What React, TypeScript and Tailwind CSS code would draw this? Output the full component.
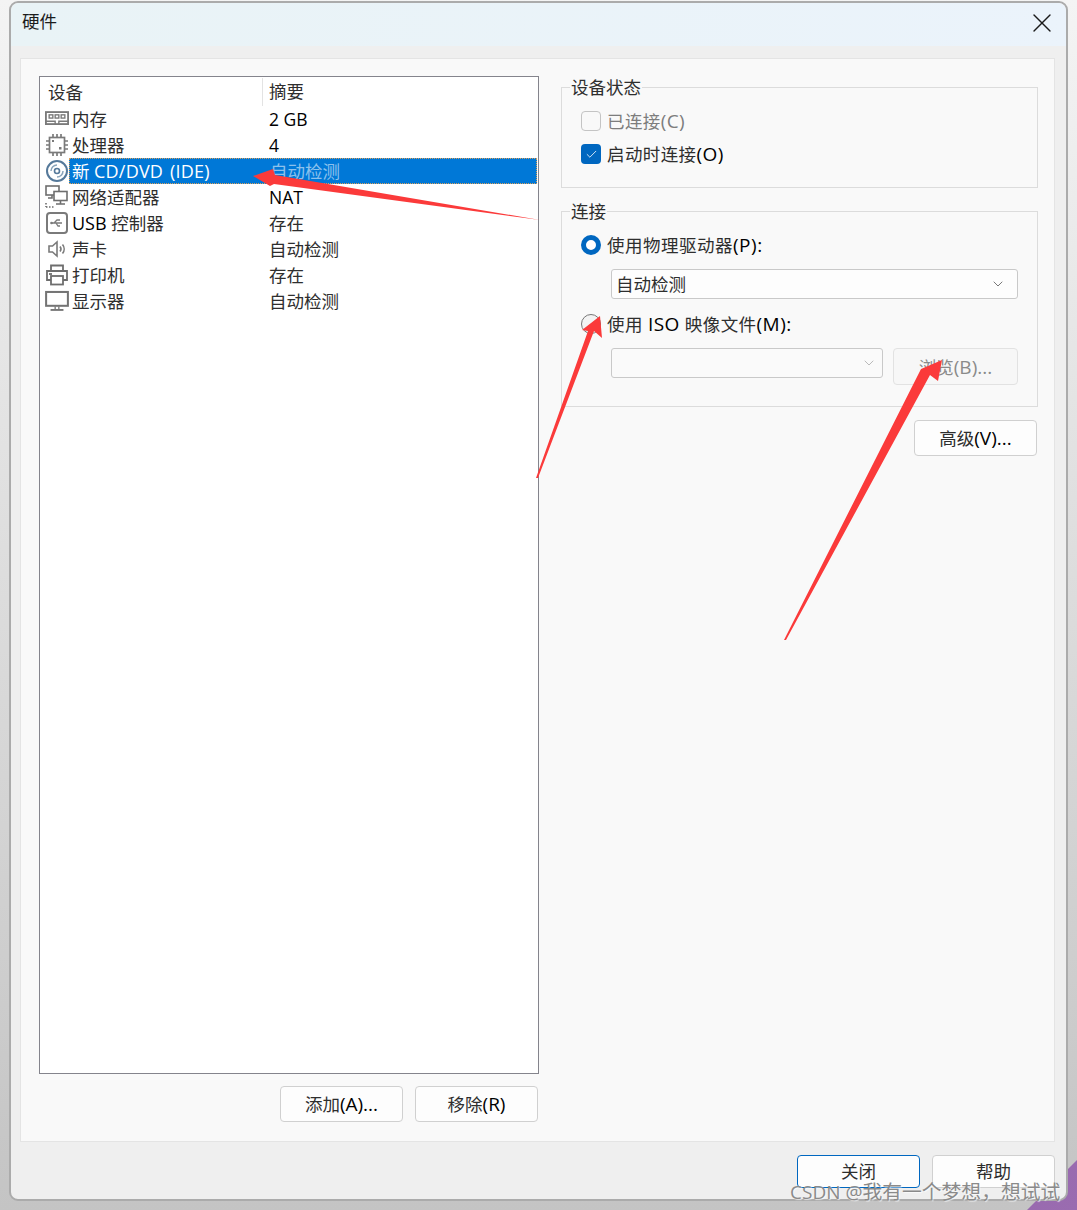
import { Check, ChevronDown, X } from "lucide-react";
import type { ReactNode } from "react";

const font = "font-['Open_Sans','Noto_Sans_CJK_SC',sans-serif]";

// latin runs sit a bit larger and darker than the CJK around them
function L({ children }: { children: ReactNode }) {
    return <span className="text-[19px] text-black [word-spacing:2px]">{children}</span>;
}

function Dim({ children }: { children: ReactNode }) {
    return <span className="text-[19px]">{children}</span>;
}

function MemoryIcon() {
    return (
        <svg width="26" height="18" viewBox="0 0 26 18" fill="none" stroke="#7a7a7a" strokeWidth="2">
            <rect x="1" y="1.5" width="24" height="13" />
            <rect x="4.5" y="4.5" width="4" height="3.5" strokeWidth="1.5" />
            <rect x="11" y="4.5" width="4" height="3.5" strokeWidth="1.5" />
            <rect x="17.5" y="4.5" width="4" height="3.5" strokeWidth="1.5" />
            <path d="M1 11.5h10v3M15 14.5v-3h10" strokeWidth="1.5" />
        </svg>
    );
}

function CpuIcon() {
    return (
        <svg width="24" height="24" viewBox="0 0 24 24" fill="none" stroke="#7a7a7a" strokeWidth="1.7">
            <rect x="4.5" y="4.5" width="15" height="15" />
            <path d="M8 1v3M12 1v3M16 1v3M8 20v3M12 20v3M16 20v3M1 8h3M1 12h3M1 16h3M20 8h3M20 12h3M20 16h3" />
            <rect x="7" y="7" width="2" height="2" fill="#7a7a7a" stroke="none" />
            <rect x="14" y="14" width="2.5" height="2.5" fill="#7a7a7a" stroke="none" />
        </svg>
    );
}

function DiscIcon() {
    return (
        <svg width="24" height="24" viewBox="0 0 24 24" fill="none" stroke="#55799a" strokeWidth="2">
            <circle cx="12" cy="12" r="10" />
            <circle cx="12" cy="12" r="2.5" strokeWidth="1.6" />
            <path d="M6 12a6 6 0 0 1 6-6M18 12a6 6 0 0 1-6 6" stroke="#8aa5bb" strokeWidth="1.5" />
        </svg>
    );
}

function NetworkIcon() {
    return (
        <svg width="24" height="24" viewBox="0 0 24 24" fill="none" stroke="#6e6e6e" strokeWidth="1.6">
            <rect x="1" y="1" width="13" height="9" />
            <rect x="9" y="6.5" width="13" height="9" fill="#fff" />
            <path d="M15.5 15.5v3M11 19h9M7 10v3H3" />
            <path d="M1 22h9M1 18v4" strokeDasharray="1.5 1.5" />
        </svg>
    );
}

function UsbIcon() {
    return (
        <svg width="22" height="22" viewBox="0 0 22 22" fill="none" stroke="#7a7a7a" strokeWidth="2">
            <rect x="1" y="1" width="20" height="20" rx="3" />
            <path d="M5 11h11M8 11l3-3h3M10 11l2 3h2" strokeWidth="1.3" />
            <circle cx="5.5" cy="11" r="1.3" fill="#7a7a7a" stroke="none" />
        </svg>
    );
}

function SpeakerIcon() {
    return (
        <svg width="20" height="20" viewBox="0 0 20 20" fill="none" stroke="#7a7a7a" strokeWidth="1.6">
            <path d="M2 7h3.5L10 3v14l-4.5-4H2z" />
            <path d="M13 7.5a4 4 0 0 1 0 5M15.5 5.5a7 7 0 0 1 0 9" />
        </svg>
    );
}

function PrinterIcon() {
    return (
        <svg width="24" height="22" viewBox="0 0 24 22" fill="none" stroke="#6e6e6e" strokeWidth="1.8">
            <path d="M6 7V1.5h12V7" />
            <path d="M6 16H2V7h20v9h-4" />
            <rect x="6" y="12" width="12" height="8.5" />
            <path d="M4 10h3" />
        </svg>
    );
}

function MonitorIcon() {
    return (
        <svg width="26" height="22" viewBox="0 0 26 22" fill="none" stroke="#747474" strokeWidth="2.2">
            <rect x="1.2" y="1.2" width="23.6" height="15" />
            <path d="M11 17v3M15 17v3" strokeWidth="1.4" />
            <path d="M6 20.7h14" strokeWidth="2" />
        </svg>
    );
}

const devices: { name: ReactNode; summary: ReactNode; icon: ReactNode; selected?: boolean }[] = [
    { name: "内存", summary: <span className="text-black">2 GB</span>, icon: <MemoryIcon /> },
    { name: "处理器", summary: <span className="text-black">4</span>, icon: <CpuIcon /> },
    { name: <>新 <span className="text-[18px] tracking-[0.2px] [word-spacing:2px]">CD/DVD (IDE)</span></>, summary: "自动检测", icon: <DiscIcon />, selected: true },
    { name: "网络适配器", summary: <span className="text-black">NAT</span>, icon: <NetworkIcon /> },
    { name: <><span className="text-[18px] text-black">USB</span> 控制器</>, summary: "存在", icon: <UsbIcon /> },
    { name: "声卡", summary: "自动检测", icon: <SpeakerIcon /> },
    { name: "打印机", summary: "存在", icon: <PrinterIcon /> },
    { name: "显示器", summary: "自动检测", icon: <MonitorIcon /> },
];

function DeviceRow({ name, summary, icon, selected }: { name: ReactNode; summary: ReactNode; icon: ReactNode; selected?: boolean }) {
    return (
        <div className="flex h-[26px] items-center">
            <div className="flex w-[29px] shrink-0 items-center justify-center pl-[5px]">{icon}</div>
            {selected ? (
                <div className="mr-px flex h-[26px] flex-1 items-center border border-dotted border-[#d9a05b] bg-[#0078d7] pl-[2px]">
                    <span className="w-[198px] whitespace-nowrap text-white">{name}</span>
                    <span className="text-[#8cc1ec]">{summary}</span>
                </div>
            ) : (
                <div className="flex flex-1 items-center pl-[3px]">
                    <span className="w-[197px] whitespace-nowrap">{name}</span>
                    <span>{summary}</span>
                </div>
            )}
        </div>
    );
}

function WinButton({ children, className }: { children: ReactNode; className: string }) {
    return (
        <button className={`flex items-center justify-center rounded-[4px] border bg-[#fdfdfd] ${className}`}>
            {children}
        </button>
    );
}

function GroupBox({ title, className, children }: { title: string; className: string; children: ReactNode }) {
    return (
        <div className={`border border-[#dcdcdc] ${className}`}>
            <div className="-mt-[13px] ml-[8px] h-[24px] w-fit bg-[#f9f9f9] px-px leading-[24px]">{title}</div>
            {children}
        </div>
    );
}

function Radio({ checked }: { checked?: boolean }) {
    if (checked) {
        return <span className="h-5 w-5 rounded-full border-[5px] border-[#0067c0] bg-white" />;
    }
    return <span className="h-5 w-5 rounded-full border border-[#777] bg-[#f3f3f3]" />;
}

export default function App() {
    return (
        <div className={`relative h-[1210px] w-[1077px] overflow-hidden bg-gradient-to-b from-[#f4f4f4] to-[#c4c4c4] text-[17.5px] leading-[26px] text-[#2e2e2e] ${font}`}>
            {/* purple wallpaper corner */}
            <div className="absolute inset-0 bg-gradient-to-br from-[#6b2f8f] to-[#9a6cb0] [clip-path:polygon(1027px_1210px,1077px_1160px,1077px_1210px)]" />

            {/* Window */}
            <div className="relative ml-[9px] mt-px flex h-[1200px] w-[1059px] flex-col rounded-[9px] border-2 border-[#ababab] bg-[#efefef]">
                <div className="flex h-[43px] shrink-0 items-center justify-between rounded-t-[8px] bg-gradient-to-r from-[#e9f3f6] to-[#ebf3fb] pb-[4px] pl-[11px] pr-[8px]">
                    <span className="-mt-[3px] text-[#1c1c1c]">硬件</span>
                    <X className="h-8 w-8 text-[#1a1a1a]" strokeWidth={1} />
                </div>

                {/* Main panel */}
                <div className="ml-[9px] mt-[12px] flex h-[1084px] w-[1035px] border border-[#e4e4e4] bg-[#f9f9f9] pl-[18px] pt-[17px]">
                    {/* Left column */}
                    <div className="flex w-[500px] flex-col">
                        <div className="h-[998px] border border-[#84848c] bg-white">
                            <div className="flex h-[29px] items-center">
                                <span className="w-[222px] pl-[8px]">设备</span>
                                <span className="h-[28px] border-l border-[#e3e3e3] pl-[6px]">摘要</span>
                            </div>
                            {devices.map((d, i) => (
                                <DeviceRow key={i} {...d} />
                            ))}
                        </div>
                        <div className="mt-[12px] flex justify-end gap-[12px] pr-px">
                            <WinButton className="h-[36px] w-[123px] border-[#d0d0d0]">添加<L>(A)...</L></WinButton>
                            <WinButton className="h-[36px] w-[123px] border-[#d0d0d0]">移除<L>(R)</L></WinButton>
                        </div>
                    </div>

                    {/* Right column */}
                    <div className="ml-[22px] flex w-[477px] flex-col pt-[11px]">
                        <GroupBox title="设备状态" className="h-[101px]">
                            <div className="ml-[19px] mt-[9px] flex h-[26px] items-center gap-[6px] tracking-[0.4px] text-[#7d7d7d]">
                                <span className="h-5 w-5 rounded-[4px] border border-[#c4c4c4]" />
                                <span>已连接<Dim>(C)</Dim></span>
                            </div>
                            <div className="ml-[19px] mt-[7px] flex h-[26px] items-center gap-[6px] tracking-[0.4px]">
                                <span className="flex h-5 w-5 items-center justify-center rounded-[4px] bg-[#0067c0]">
                                    <Check className="h-[13px] w-[13px] text-white" strokeWidth={1.5} />
                                </span>
                                <span>启动时连接<L>(O)</L></span>
                            </div>
                        </GroupBox>

                        <GroupBox title="连接" className="mt-[23px] h-[196px]">
                            <div className="ml-[19px] mt-[9px] flex h-[26px] items-center gap-[6px] tracking-[0.5px]">
                                <Radio checked />
                                <span>使用物理驱动器<L>(P):</L></span>
                            </div>
                            <div className="ml-[49px] mt-[11px] flex h-[30px] w-[407px] items-center justify-between rounded-[3px] border border-[#c9c9c9] bg-[#fdfdfd] pl-[4px] pr-[11px]">
                                自动检测
                                <ChevronDown className="h-[16px] w-[16px] text-[#555]" strokeWidth={1.2} />
                            </div>
                            <div className="ml-[19px] mt-[12px] flex h-[26px] items-center gap-[6px] tracking-[0.45px]">
                                <Radio />
                                <span>使用 <L>ISO</L> 映像文件<L>(M):</L></span>
                            </div>
                            <div className="ml-[49px] mt-[11px] flex items-start gap-[10px]">
                                <div className="flex h-[30px] w-[272px] items-center justify-end rounded-[3px] border border-[#c9c9c9] bg-[#fafafa] pr-[5px]">
                                    <ChevronDown className="h-[16px] w-[16px] text-[#aaa]" strokeWidth={1.2} />
                                </div>
                                <button className="flex h-[37px] w-[125px] items-center justify-center rounded-[4px] border border-[#e2e2e2] bg-[#f7f7f7] text-[#8a8a8a]">
                                    浏览<Dim>(B)...</Dim>
                                </button>
                            </div>
                        </GroupBox>

                        <div className="mr-px mt-[13px] flex justify-end">
                            <WinButton className="h-[36px] w-[123px] border-[#d0d0d0]">高级<L>(V)...</L></WinButton>
                        </div>
                    </div>
                </div>

                {/* Footer */}
                <div className="ml-[786px] mt-[13px] flex gap-[12px]">
                    <WinButton className="h-[33px] w-[123px] border-[#0067c0] pb-[2px]">关闭</WinButton>
                    <WinButton className="h-[33px] w-[123px] border-[#d0d0d0] pb-[2px]">帮助</WinButton>
                </div>
            </div>

            {/* Red annotation arrows */}
            <svg className="absolute left-0 top-0" width="1077" height="1210" fill="#fb3a3a">
                <polygon points="253,176 273,169 275,175 540,220 274,184 270,186" />
                <polygon points="600,316 602,338 594,331 538,478 536,478 588,331 582,330" />
                <polygon points="942,360 938,381 930,375 786,640 784,640 921,369" />
            </svg>

            {/* Watermark */}
            <div className="absolute left-[790px] top-[1179px] whitespace-nowrap text-[19.8px] text-[#8a8a8a] [text-shadow:1px_1px_1px_rgba(255,255,255,0.7)]">
                <span className="text-[19px]">CSDN @</span>我有一个梦想，想试试
            </div>
        </div>
    );
}
